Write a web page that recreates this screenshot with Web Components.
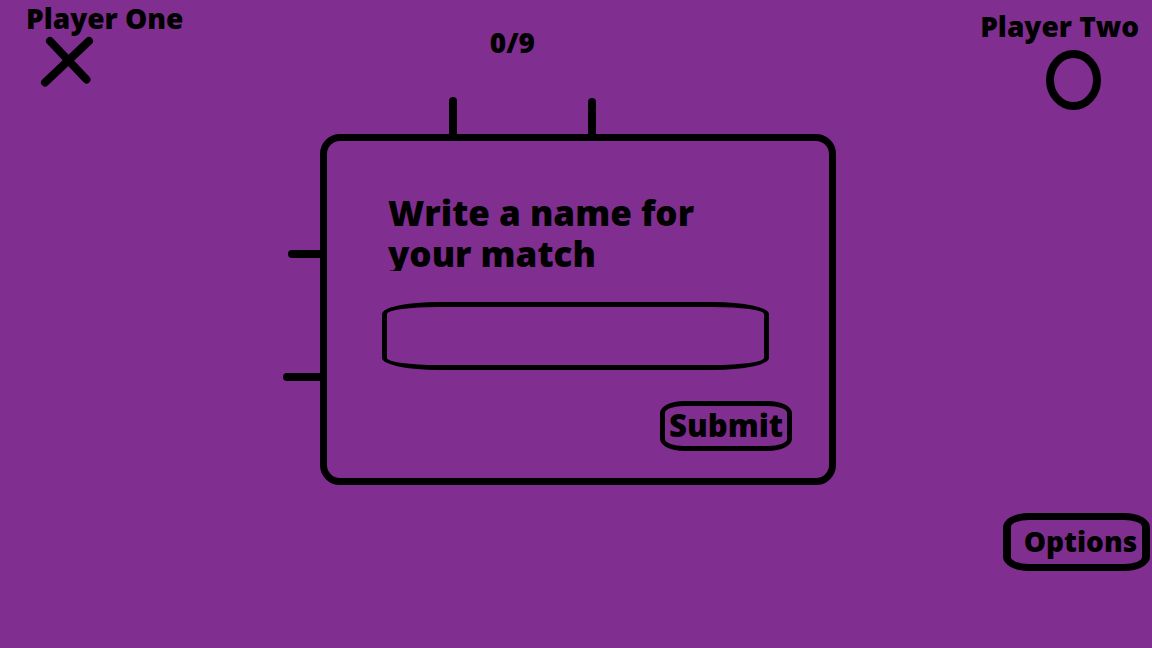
<!DOCTYPE html>
<html lang="en">
<head>
<meta charset="utf-8">
<meta name="viewport" content="width=device-width, initial-scale=1">
<title>Tic-tac-toe: new match</title>
<style>
  body { margin: 0; background: #812e91; color: #000; font-family: "Open Sans", "Noto Sans", sans-serif; font-weight: 800; }
</style>
</head>
<body>
<match-screen></match-screen>
<script>
class BaseElement extends HTMLElement {
  connectedCallback() {
    if (this.shadowRoot) return;
    const template = document.createElement('template');
    template.innerHTML = this.constructor.markup;
    this.attachShadow({ mode: 'open' }).append(template.content.cloneNode(true));
  }
}

class PlayerBadge extends BaseElement {
  static markup = `
    <style>
      :host { display: flex; flex-direction: column; font-size: 28px; line-height: 32px; white-space: nowrap; }
      ::slotted(svg) { display: block; }
    </style>
    <slot></slot>
    <slot name="mark"></slot>`;
}
customElements.define('player-badge', PlayerBadge);

class TurnCounter extends BaseElement {
  static markup = `
    <style>:host { display: block; font-size: 28px; line-height: 32px; }</style>
    <slot></slot>`;
}
customElements.define('turn-counter', TurnCounter);

class GameButton extends BaseElement {
  static markup = `
    <style>
      :host { display: block; }
      button {
        box-sizing: border-box; width: 100%; height: 50px; padding: 0 0 2px; margin: 0;
        border: 5px solid #000; border-radius: 24px / 12px; background: none;
        color: inherit; font: inherit; font-size: 31px; line-height: 32px; cursor: pointer;
      }
      :host([size="large"]) button { height: 58px; border-width: 7px 8px; border-radius: 26px / 14px; font-size: 28px; padding-left: 8px; }
    </style>
    <button type="button"><slot></slot></button>`;
}
customElements.define('game-button', GameButton);

class NameDialog extends BaseElement {
  static markup = `
    <style>
      :host { display: block; box-sizing: border-box; border: 7px solid #000; border-radius: 20px; padding: 51px 37px 27px 55px; }
      form { display: flex; flex-direction: column; gap: 31px; margin: 0; }
      label { max-height: 79px; max-width: 320px; margin-left: 6px; overflow: hidden; font-size: 35px; line-height: 41px; }
      input {
        box-sizing: border-box; height: 68px; margin: 0 23px 0 0; padding: 0 24px;
        border: 5px solid #000; border-radius: 56px / 12px; background: none; outline: none;
        color: inherit; font: inherit; font-size: 28px;
      }
      game-button { align-self: flex-end; width: 132px; }
    </style>
    <form>
      <label for="match-name"><slot></slot></label>
      <input id="match-name" type="text" autocomplete="off">
      <game-button>Submit</game-button>
    </form>`;
}
customElements.define('name-dialog', NameDialog);

class GameBoard extends BaseElement {
  static markup = `
    <style>
      :host { display: block; position: relative; }
      i { position: absolute; background: #000; }
      .col { bottom: 100%; width: 8px; height: 37px; border-radius: 4px 4px 0 0; }
      .row { right: 100%; height: 8px; width: 32px; border-radius: 4px 0 0 4px; }
      .c1 { left: 25%; }
      .c2 { left: 52%; height: 36px; }
      .r1 { top: 33%; }
      .r2 { top: 68%; width: 37px; }
    </style>
    <i class="col c1"></i><i class="col c2"></i><i class="row r1"></i><i class="row r2"></i>
    <slot></slot>`;
}
customElements.define('game-board', GameBoard);

class MatchScreen extends BaseElement {
  static markup = `
    <style>
      :host { display: flex; flex-direction: column; min-height: 100vh; }
      header { display: grid; grid-template-columns: 5fr 5fr 2fr; align-items: start; padding: 2px 13px 0 26px; }
      turn-counter { margin-top: 24px; }
      .one svg { margin: 1px 0 0 14px; }
      .two { justify-self: end; margin-top: 8px; }
      .two svg { align-self: flex-end; margin: 8px 38px 0 0; }
      main { display: flex; justify-content: center; padding: 24px 0 28px 4px; }
      game-board { width: 516px; max-width: 90%; }
      footer { display: flex; justify-content: flex-end; padding-right: 2px; }
      footer game-button { width: 147px; }
    </style>
    <header>
      <player-badge class="one">Player One
        <svg slot="mark" width="56" height="52" viewBox="0 0 56 52" aria-hidden="true">
          <path d="M10 6 L46.500 44.500 M49 6 L5 47.500" fill="none" stroke="#000" stroke-width="8" stroke-linecap="round"/>
        </svg>
      </player-badge>
      <turn-counter>0/9</turn-counter>
      <player-badge class="two">Player Two
        <svg slot="mark" width="55" height="60" viewBox="0 0 55 60" aria-hidden="true">
          <ellipse cx="27.500" cy="30" rx="23.500" ry="26" fill="none" stroke="#000" stroke-width="8"/>
        </svg>
      </player-badge>
    </header>
    <main>
      <game-board><name-dialog>Write a name for your match</name-dialog></game-board>
    </main>
    <footer><game-button size="large">Options</game-button></footer>`;
}
customElements.define('match-screen', MatchScreen);
</script>
</body>
</html>
